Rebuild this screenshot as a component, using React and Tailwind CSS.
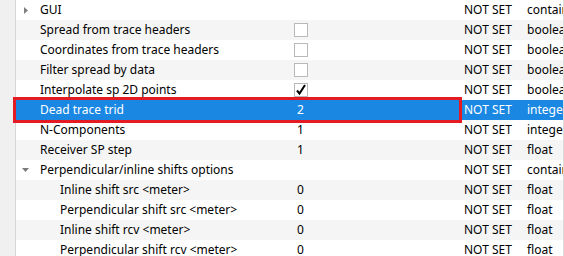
import React from 'react';

const rows = [
  { name: 'GUI', level: 0, arrow: 'right', type: 'container' },
  { name: 'Spread from trace headers', level: 0, check: false, type: 'boolean' },
  { name: 'Coordinates from trace headers', level: 0, check: false, type: 'boolean' },
  { name: 'Filter spread by data', level: 0, check: false, type: 'boolean' },
  { name: 'Interpolate sp 2D points', level: 0, check: true, type: 'boolean' },
  { name: 'Dead trace trid', level: 0, value: '2', type: 'integer', selected: true },
  { name: 'N-Components', level: 0, value: '1', type: 'integer' },
  { name: 'Receiver SP step', level: 0, value: '1', type: 'float' },
  { name: 'Perpendicular/inline shifts options', level: 0, arrow: 'down', type: 'container' },
  { name: 'Inline shift src <meter>', level: 1, value: '0', type: 'float' },
  { name: 'Perpendicular shift src <meter>', level: 1, value: '0', type: 'float' },
  { name: 'Inline shift rcv <meter>', level: 1, value: '0', type: 'float' },
  { name: 'Perpendicular shift rcv <meter>', level: 1, value: '0', type: 'float' },
];

const Arrow = ({ dir }) =>
  dir === 'right' ? (
    <svg width="4" height="7" viewBox="0 0 4 7" className="absolute left-[8px] top-[7px]">
      <path d="M0 0 L4 3.5 L0 7 Z" fill="#808080" />
    </svg>
  ) : (
    <svg width="7" height="4" viewBox="0 0 7 4" className="absolute left-[6px] top-[8px]">
      <path d="M0 0 L7 0 L3.5 4 Z" fill="#7a7a7a" />
    </svg>
  );

const CheckBox = ({ checked }) => (
  <div className="w-[14px] h-[14px] border border-[#b9b9b9] bg-white flex items-center justify-center">
    {checked && (
      <svg width="12" height="12" viewBox="0 0 12 12">
        <polyline points="2,6.5 4.5,9.5 10,1" fill="none" stroke="#000" strokeWidth="2" />
      </svg>
    )}
  </div>
);

export default function App() {
  return (
    <div
      className="w-[564px] h-[256px] overflow-hidden flex bg-white text-[12px] text-black"
      style={{ fontFamily: '"Noto Sans", "Open Sans", sans-serif' }}
    >
      <div className="w-[16px] shrink-0 bg-[#f0f0f0] border-r border-[#d6d6d6]" />
      <div className="relative w-[548px] border-r border-[#dcdcdc]">
        {rows.map((r, i) => {
          const bg = r.selected ? 'bg-[#1a87e3] text-white' : i % 2 ? 'bg-[#f5f5f5]' : 'bg-white';
          return (
            <div key={i} className={`grid grid-cols-[276px_169px_63px_39px] h-[20px] items-center whitespace-nowrap ${bg}`}>
              <div className={`relative h-full flex items-center overflow-hidden ${r.level ? 'pl-[44px]' : 'pl-[24px]'}`}>
                {r.arrow && <Arrow dir={r.arrow} />}
                {r.name}
              </div>
              <div className="h-full flex items-center overflow-hidden">
                {r.check !== undefined ? (
                  <div className="pl-[2px]">
                    <CheckBox checked={r.check} />
                  </div>
                ) : (
                  <span className="pl-[5px]">{r.value}</span>
                )}
              </div>
              <div className="h-full flex items-center overflow-hidden pl-[3px]">NOT SET</div>
              <div className="h-full flex items-center overflow-hidden pl-[3px]">{r.type}</div>
            </div>
          );
        })}
        <div className="absolute left-[-3px] top-[97px] w-[449px] h-[26px] border-[3px] border-[#e41b23] pointer-events-none" />
      </div>
    </div>
  );
}
